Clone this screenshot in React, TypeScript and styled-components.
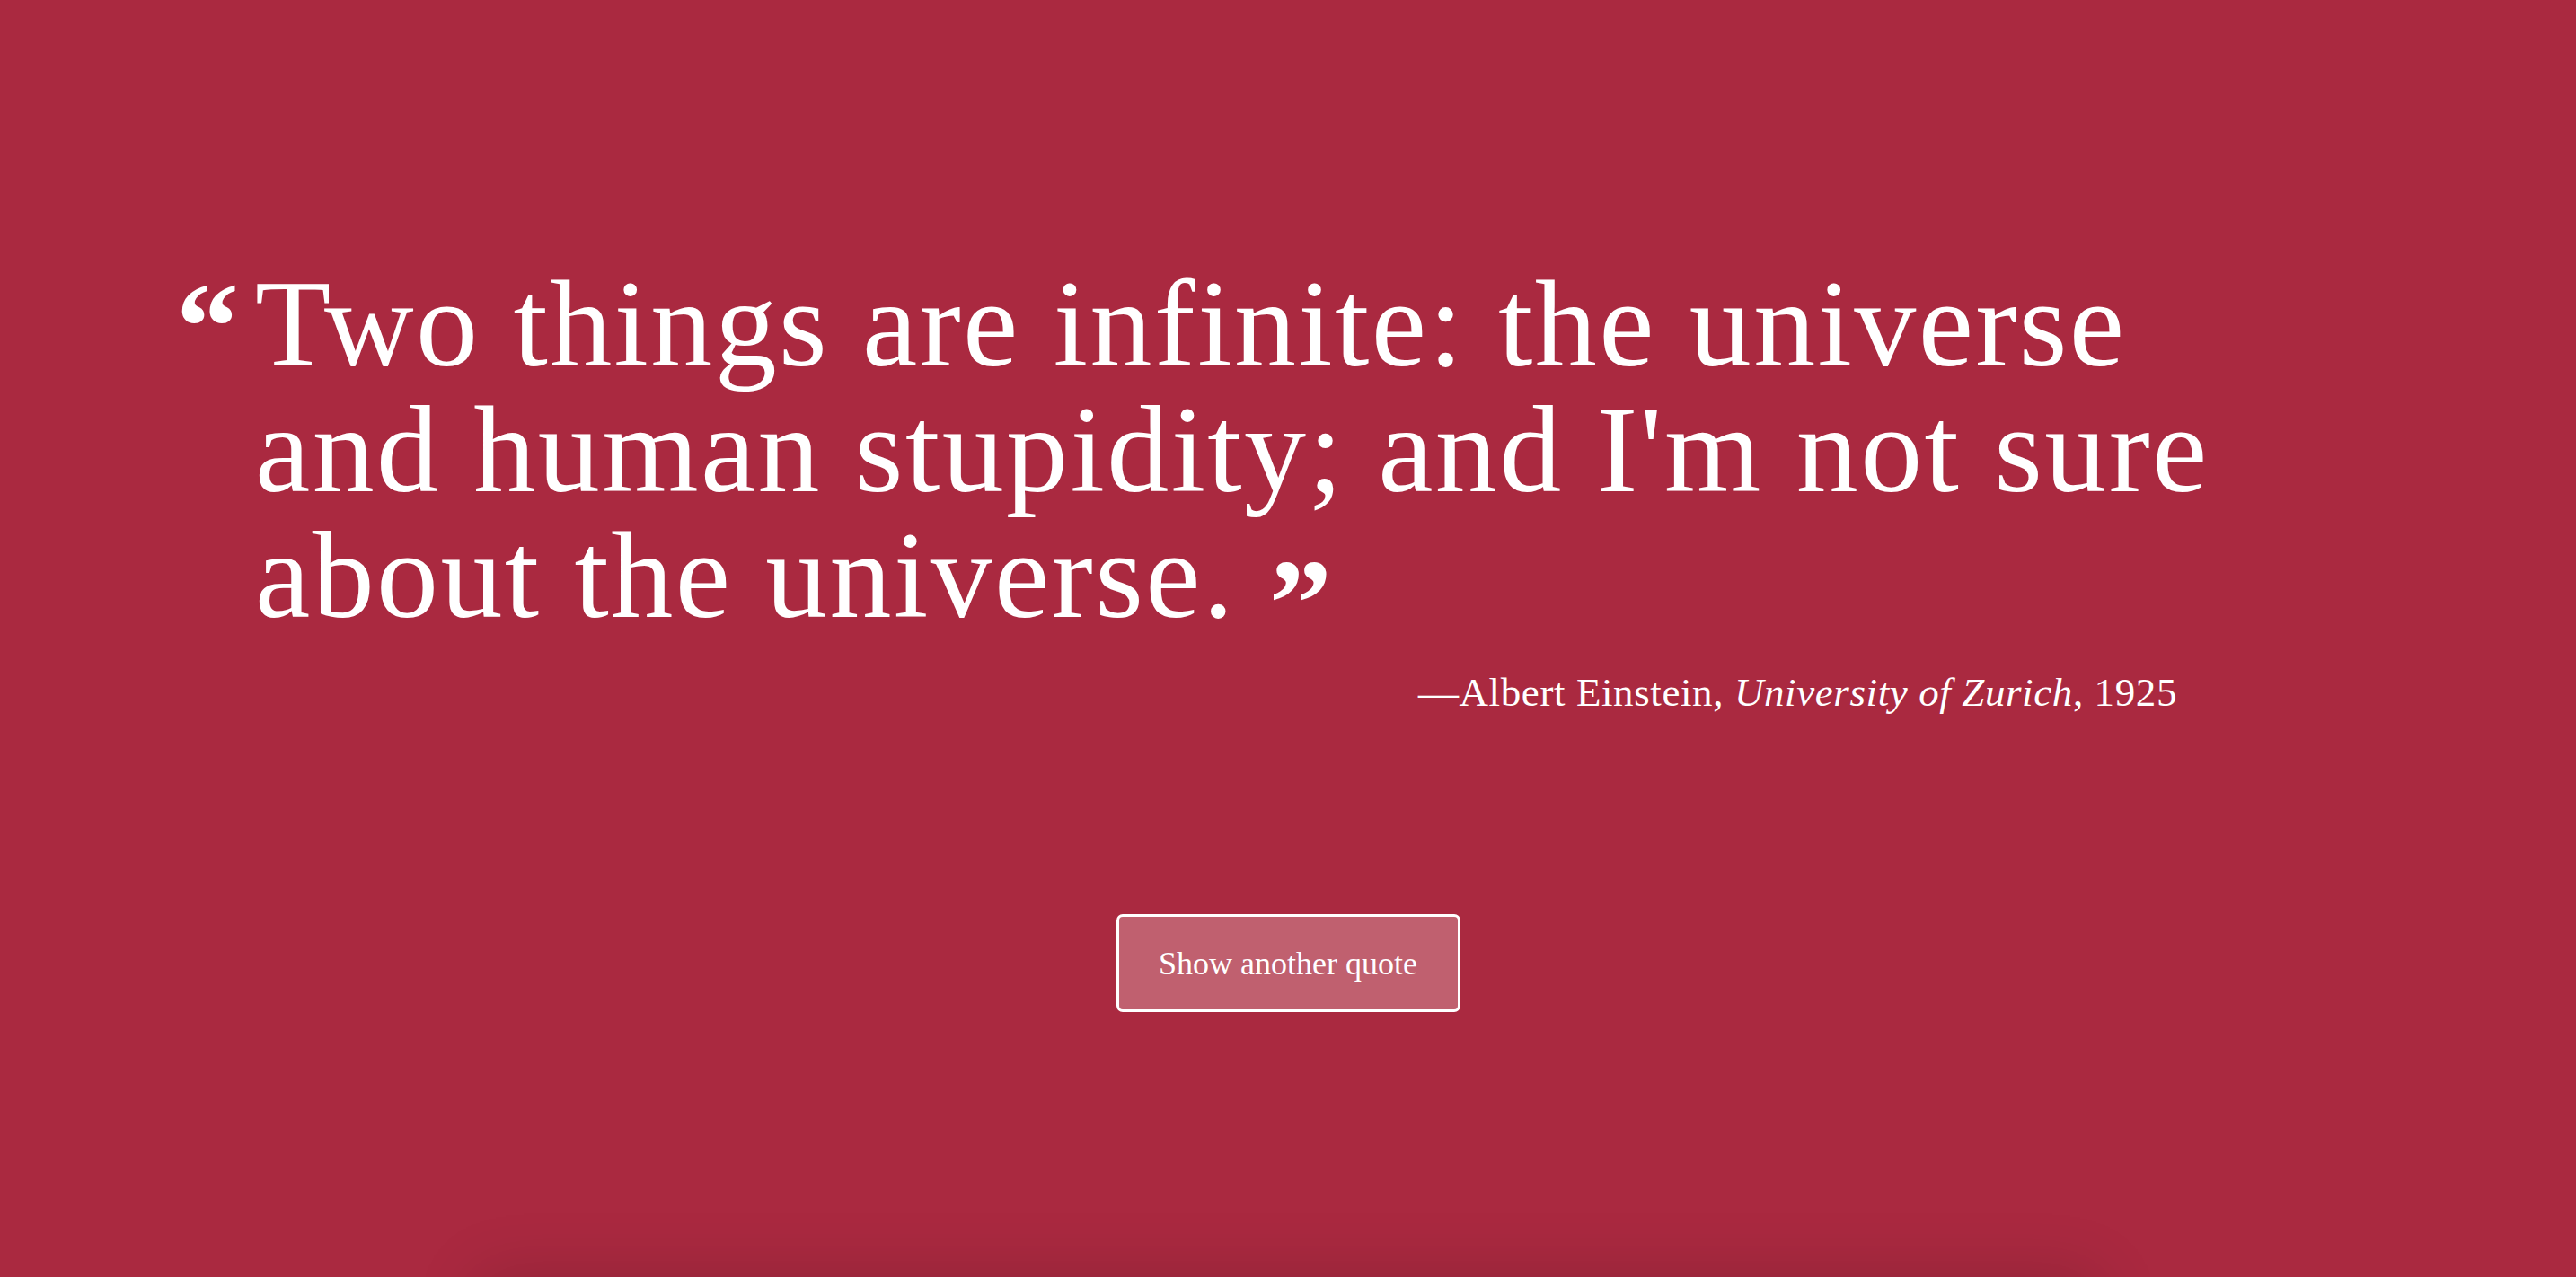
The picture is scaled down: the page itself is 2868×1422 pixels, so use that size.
import React from "react";
import styled, { createGlobalStyle } from "styled-components";

const GlobalStyle = createGlobalStyle`
  html, body {
    margin: 0;
    padding: 0;
    background: #aa2940;
  }
  body {
    font-family: "Liberation Serif", "DejaVu Serif", serif;
    color: #ffffff;
  }
`;

const Viewport = styled.div`
  height: 100vh;
  overflow: hidden;
  background: #aa2940;
`;

const Hero = styled.section`
  height: 100vh;
  display: flex;
  flex-direction: column;
  align-items: stretch;
  box-sizing: border-box;
  padding-top: 291px;
`;

const Figure = styled.figure`
  margin: 0 0 0 196px;
  width: 2338px;
  display: flex;
  flex-direction: column;
`;

const QuoteRow = styled.div`
  display: flex;
  align-items: flex-start;
`;

const OpenMark = styled.span`
  flex: 0 0 88px;
  font-family: "Liberation Serif", serif;
  font-weight: 700;
  font-size: 140px;
  line-height: 140px;
  margin-top: 3px;
`;

const QuoteText = styled.blockquote`
  margin: 0;
  width: 2250px;
  font-size: 138px;
  line-height: 140px;
  letter-spacing: 2.4px;
  font-weight: 400;
`;

const CloseMark = styled.span`
  font-weight: 700;
  font-size: 140px;
  letter-spacing: 0;
  vertical-align: -32px;
  line-height: 0;
`;

const Caption = styled.figcaption`
  margin-top: 30px;
  padding-right: 110px;
  text-align: right;
  font-size: 45px;
  line-height: 60px;
  letter-spacing: 0.6px;
  cite {
    font-style: italic;
  }
`;

const Actions = styled.div`
  display: flex;
  justify-content: center;
  margin-top: 217px;
`;

const Button = styled.button`
  box-sizing: border-box;
  width: 383px;
  height: 109px;
  background: #c0606f;
  border: 3px solid #ffffff;
  border-radius: 7px;
  color: #ffffff;
  font-family: "Liberation Serif", serif;
  font-size: 36px;
  line-height: 36px;
  padding: 0;
  cursor: pointer;
`;

const NextCard = styled.section`
  width: 1800px;
  height: 400px;
  margin: 0 auto;
  background: #aa2940;
  box-shadow: 0 0 70px rgba(0, 0, 0, 0.16);
`;

export default function App() {
  return (
    <>
      <GlobalStyle />
      <Viewport>
        <Hero>
          <Figure>
            <QuoteRow>
              <OpenMark>“</OpenMark>
              <QuoteText>
                Two things are infinite: the universe and human stupidity; and
                I'm not sure about the universe. <CloseMark>”</CloseMark>
              </QuoteText>
            </QuoteRow>
            <Caption>
              —Albert Einstein, <cite>University of Zurich</cite>, 1925
            </Caption>
          </Figure>
          <Actions>
            <Button type="button">Show another quote</Button>
          </Actions>
        </Hero>
        <NextCard />
      </Viewport>
    </>
  );
}
